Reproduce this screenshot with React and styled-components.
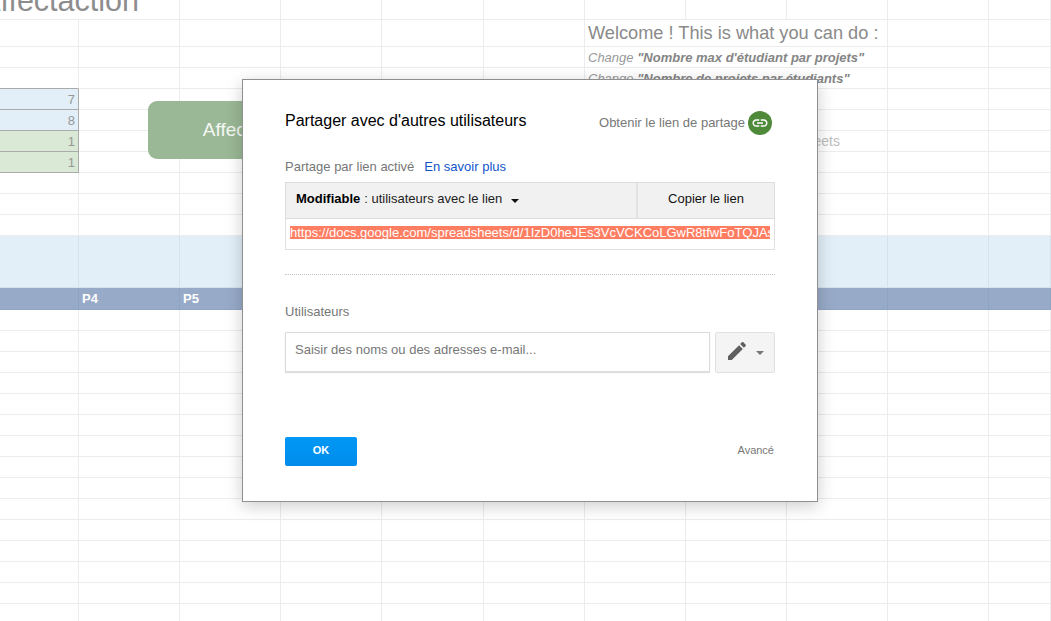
import React from "react";
import styled, { createGlobalStyle } from "styled-components";

const Global = createGlobalStyle`
  html, body { margin: 0; padding: 0; background: #fff; overflow: hidden; }
  * { box-sizing: border-box; }
  body { font-family: "Liberation Sans", Arial, sans-serif; }
`;

const COLS = "79px 101px 101px 101px 102px 101px 101px 101px 101px 101px 62px";

const Page = styled.div`
  position: relative;
  width: 1051px;
  height: 621px;
  overflow: hidden;
`;

const Sheet = styled.div`
  display: flex;
  flex-direction: column;
`;

const Row = styled.div`
  display: grid;
  grid-template-columns: ${COLS};
  height: ${(p) => p.$h}px;
  background: ${(p) => p.$bg || "#fff"};
`;

const Cell = styled.div`
  grid-column: span ${(p) => p.$span || 1};
  display: flex;
  align-items: center;
  min-width: 0;
  border-right: 1px solid ${(p) => p.$line || "#ececec"};
  border-bottom: 1px solid ${(p) => p.$under || p.$line || "#ececec"};
  background: ${(p) => p.$bg || "transparent"};
  white-space: nowrap;
`;

const TitleCell = styled(Cell)`
  justify-content: flex-end;
  align-items: flex-end;
  overflow: hidden;
  padding-right: 40px;
`;

const SheetTitle = styled.span`
  font-size: 30.5px;
  line-height: 34px;
  margin-bottom: 2px;
  color: #8d8d8d;
`;

const Welcome = styled.span`
  font-size: 18.2px;
  padding-left: 3px;
  color: #8a8a8a;
`;

const Hint = styled.span`
  font-size: 13px;
  font-style: italic;
  padding-left: 3px;
  color: #9a9a9a;
  b { color: #858585; }
`;

const NoteCell = styled(Cell)`
  justify-content: flex-end;
  padding-right: 47px;
  font-size: 14px;
  color: #bdbdbd;
`;

const NumberCell = styled(Cell)`
  justify-content: flex-end;
  padding-right: 3px;
  font-size: 13px;
  color: #979797;
`;

const HeadCell = styled(Cell)`
  padding-left: 3px;
  font-size: 13px;
  font-weight: 700;
  color: #fff;
`;

const ActionButton = styled.div`
  position: absolute;
  left: 148px;
  top: 101px;
  width: 199px;
  height: 58px;
  display: flex;
  align-items: center;
  justify-content: center;
  border-radius: 9px;
  background: #9ab895;
  color: #f4f7f3;
  font-size: 19px;
`;

const Dialog = styled.div`
  position: absolute;
  left: 242px;
  top: 79px;
  width: 576px;
  height: 423px;
  display: flex;
  flex-direction: column;
  padding: 31px 42px 35px;
  background: #fff;
  border: 1px solid #8f8f8f;
  box-shadow: 0 4px 16px rgba(0, 0, 0, 0.2);
`;

const DialogHead = styled.div`
  display: flex;
  align-items: center;
  justify-content: space-between;
  height: 24px;
  padding-right: 3px;
`;

const DialogTitle = styled.div`
  font-size: 16px;
  color: #000;
  margin-top: -4px;
`;

const ShareLink = styled.div`
  display: flex;
  align-items: center;
  gap: 3px;
  font-size: 13px;
  color: #777;
`;

const ShareText = styled.span`
  padding-bottom: 2px;
`;

const LinkBadge = styled.span`
  display: flex;
  align-items: center;
  justify-content: center;
  width: 24px;
  height: 24px;
  border-radius: 50%;
  background: #4f8a3a;
`;

const StatusLine = styled.div`
  display: flex;
  gap: 10px;
  margin-top: 24px;
  height: 15px;
  line-height: 15px;
  font-size: 13px;
  color: #777;
`;

const Anchor = styled.span`
  color: #15c;
`;

const LinkBox = styled.div`
  margin-top: 8px;
  height: 68px;
  display: flex;
  flex-direction: column;
  border: 1px solid #e0e0e0;
  border-top: 0;
`;

const LinkBar = styled.div`
  display: flex;
  height: 37px;
  margin: 0 -1px;
  background: #f1f1f1;
  border: 1px solid #dcdcdc;
`;

const Access = styled.div`
  flex: 1;
  display: flex;
  align-items: center;
  padding: 0 0 4px 10px;
  font-size: 13px;
  color: #222;
  border-right: 2px solid #e2e2e2;
  b { color: #000; margin-right: 4px; }
`;

const Caret = styled.span`
  display: inline-block;
  width: 0;
  height: 0;
  margin: 5px 0 0 ${(p) => p.$gap || 0}px;
  border-style: solid;
  border-width: 4px 4px 0;
  border-color: ${(p) => p.$color || "#222"} transparent transparent;
`;

const CopyButton = styled.div`
  width: 136px;
  display: flex;
  align-items: center;
  justify-content: center;
  padding-bottom: 4px;
  font-size: 13px;
  color: #111;
`;

const UrlField = styled.div`
  padding: 7px 4px 0;
`;

const UrlText = styled.div`
  height: 13px;
  line-height: 13px;
  overflow: hidden;
  white-space: nowrap;
  background: #ff7d61;
  color: #fff;
  font-size: 13px;
`;

const Divider = styled.div`
  margin-top: 24px;
  border-top: 1px dotted #c4c4c4;
`;

const SectionLabel = styled.div`
  margin-top: 29px;
  height: 15px;
  line-height: 15px;
  font-size: 13px;
  color: #777;
`;

const InviteRow = styled.div`
  display: flex;
  gap: 5px;
  margin-top: 13px;
`;

const InviteInput = styled.div`
  flex: 1;
  height: 40px;
  padding: 9px 9px 0;
  font-size: 13px;
  line-height: 15px;
  color: #777;
  border: 1px solid #dcdcdc;
  box-shadow: 0 1px 1px rgba(0, 0, 0, 0.12);
`;

const RoleButton = styled.div`
  width: 60px;
  height: 41px;
  display: flex;
  align-items: center;
  padding: 0 0 4px 9px;
  gap: 7px;
  background: #f4f4f4;
  border: 1px solid #e0e0e0;
  border-radius: 2px;
`;

const Footer = styled.div`
  margin-top: auto;
  display: flex;
  align-items: center;
  justify-content: space-between;
  padding-right: 1px;
`;

const OkButton = styled.div`
  width: 72px;
  height: 29px;
  display: flex;
  align-items: center;
  justify-content: center;
  padding-bottom: 3px;
  border-radius: 2px;
  background: linear-gradient(#0098f5, #008ceb);
  color: #fff;
  font-size: 11px;
  font-weight: 700;
`;

const Advanced = styled.div`
  font-size: 11px;
  color: #777;
  margin-bottom: 3px;
`;

const blanks = (n, props = {}) =>
  Array.from({ length: n }, (_, i) => <Cell key={"b" + i} {...props} />);

const dataRow = (key, value, bg) => (
  <Row key={key} $h={21}>
    <NumberCell $bg={bg} $line="#ababab">{value}</NumberCell>
    {blanks(10)}
  </Row>
);

export default function App() {
  return (
    <Page>
      <Global />
      <Sheet>
        <Row $h={20}>
          <TitleCell $span={2}>
            <SheetTitle>Affectaction</SheetTitle>
          </TitleCell>
          {blanks(9)}
        </Row>
        <Row $h={27}>
          {blanks(6)}
          <Cell $span={3}>
            <Welcome>Welcome ! This is what you can do :</Welcome>
          </Cell>
          {blanks(2)}
        </Row>
        <Row $h={21}>
          {blanks(6)}
          <Cell $span={3}>
            <Hint>Change <b>"Nombre max d'étudiant par projets"</b></Hint>
          </Cell>
          {blanks(2)}
        </Row>
        <Row $h={21}>
          <Cell $under="#ababab" />
          {blanks(5)}
          <Cell $span={3}>
            <Hint>Change <b>"Nombre de projets par étudiants"</b></Hint>
          </Cell>
          {blanks(2)}
        </Row>
        {dataRow("r7", 7, "#e2eff8")}
        {dataRow("r8", 8, "#e2eff8")}
        <Row $h={21}>
          <NumberCell $bg="#d9e9d5" $line="#ababab">1</NumberCell>
          {blanks(5)}
          <NoteCell $span={3}>Google Sheets</NoteCell>
          {blanks(2)}
        </Row>
        {dataRow("g2", 1, "#d9e9d5")}
        {[0, 1, 2].map((i) => (
          <Row key={"s" + i} $h={21}>{blanks(11)}</Row>
        ))}
        <Row $h={52} $bg="#e2eff8">{blanks(11, { $line: "#d5e2ec" })}</Row>
        <Row $h={22} $bg="#97aac8">
          <HeadCell $line="#8fa3c2" />
          <HeadCell $line="#8fa3c2">P4</HeadCell>
          <HeadCell $line="#8fa3c2">P5</HeadCell>
          {blanks(8, { $line: "#8fa3c2" })}
        </Row>
        {Array.from({ length: 15 }, (_, i) => (
          <Row key={"t" + i} $h={21}>{blanks(11)}</Row>
        ))}
      </Sheet>

      <ActionButton>Affectation</ActionButton>

      <Dialog>
        <DialogHead>
          <DialogTitle>Partager avec d'autres utilisateurs</DialogTitle>
          <ShareLink>
            <ShareText>Obtenir le lien de partage</ShareText>
            <LinkBadge>
              <svg width="18" height="18" viewBox="0 0 24 24" fill="#fff">
                <path d="M3.9 12c0-1.71 1.39-3.1 3.1-3.1h4V7H7c-2.76 0-5 2.24-5 5s2.24 5 5 5h4v-1.9H7c-1.71 0-3.1-1.39-3.1-3.1zM8 13h8v-2H8v2zm9-6h-4v1.9h4c1.71 0 3.1 1.39 3.1 3.1s-1.39 3.1-3.1 3.1h-4V17h4c2.76 0 5-2.24 5-5s-2.24-5-5-5z" />
              </svg>
            </LinkBadge>
          </ShareLink>
        </DialogHead>

        <StatusLine>
          Partage par lien activé
          <Anchor>En savoir plus</Anchor>
        </StatusLine>

        <LinkBox>
          <LinkBar>
            <Access>
              <b>Modifiable</b> : utilisateurs avec le lien
              <Caret $gap={9} $color="#111" />
            </Access>
            <CopyButton>Copier le lien</CopyButton>
          </LinkBar>
          <UrlField>
            <UrlText>https://docs.google.com/spreadsheets/d/1IzD0heJEs3VcVCKCoLGwR8tfwFoTQJAs3VcVCKCoLGw/edit?usp=sharing</UrlText>
          </UrlField>
        </LinkBox>

        <Divider />
        <SectionLabel>Utilisateurs</SectionLabel>

        <InviteRow>
          <InviteInput>Saisir des noms ou des adresses e-mail...</InviteInput>
          <RoleButton>
            <svg width="24" height="24" viewBox="0 0 24 24" fill="#5f5f5f">
              <path d="M3 17.25V21h3.75L17.81 9.94l-3.75-3.75L3 17.25zM20.71 7.04c.39-.39.39-1.02 0-1.41l-2.34-2.34c-.39-.39-1.02-.39-1.41 0l-1.83 1.83 3.75 3.75 1.83-1.83z" />
            </svg>
            <Caret $color="#777" />
          </RoleButton>
        </InviteRow>

        <Footer>
          <OkButton>OK</OkButton>
          <Advanced>Avancé</Advanced>
        </Footer>
      </Dialog>
    </Page>
  );
}
